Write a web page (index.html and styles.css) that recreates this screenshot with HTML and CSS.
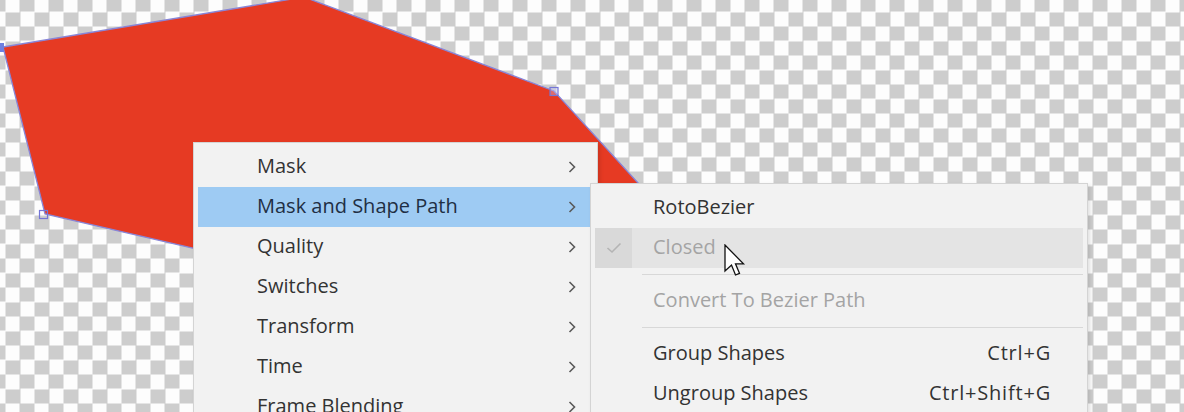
FILE: index.html
```html
<!DOCTYPE html>
<html>
<head>
<meta charset="utf-8">
<link rel="stylesheet" href="styles.css">
</head>
<body>
<div class="stage">
  <svg class="shape" width="1184" height="412" viewBox="0 0 1184 412">
    <polygon points="3,47 304,-3 554,91 660,207 400,296 45,214" fill="#e63a23" stroke="#8886d8" stroke-width="1.3"/>
    <rect x="-4" y="43" width="8" height="9" fill="#6d7fe0"/>
    <rect x="550" y="87.5" width="8" height="8" fill="rgba(200,200,255,0.35)" stroke="#7476d6" stroke-width="1.2"/>
    <rect x="39.5" y="210.5" width="8" height="8" fill="none" stroke="#7476d6" stroke-width="1.2"/>
  </svg>

  <div class="menu main-menu">
    <div class="item"><span class="label">Mask</span><svg class="chev" width="8" height="12" viewBox="0 0 8 12"><polyline points="1.5,1 6.5,6 1.5,11"/></svg></div>
    <div class="item active"><span class="label">Mask and Shape Path</span><svg class="chev" width="8" height="12" viewBox="0 0 8 12"><polyline points="1.5,1 6.5,6 1.5,11"/></svg></div>
    <div class="item"><span class="label">Quality</span><svg class="chev" width="8" height="12" viewBox="0 0 8 12"><polyline points="1.5,1 6.5,6 1.5,11"/></svg></div>
    <div class="item"><span class="label">Switches</span><svg class="chev" width="8" height="12" viewBox="0 0 8 12"><polyline points="1.5,1 6.5,6 1.5,11"/></svg></div>
    <div class="item"><span class="label">Transform</span><svg class="chev" width="8" height="12" viewBox="0 0 8 12"><polyline points="1.5,1 6.5,6 1.5,11"/></svg></div>
    <div class="item"><span class="label">Time</span><svg class="chev" width="8" height="12" viewBox="0 0 8 12"><polyline points="1.5,1 6.5,6 1.5,11"/></svg></div>
    <div class="item"><span class="label">Frame Blending</span><svg class="chev" width="8" height="12" viewBox="0 0 8 12"><polyline points="1.5,1 6.5,6 1.5,11"/></svg></div>
  </div>

  <div class="menu sub-menu">
    <div class="sub-item"><span class="check"></span><span class="label">RotoBezier</span></div>
    <div class="sub-item hover disabled"><span class="check"><svg width="16" height="12" viewBox="0 0 16 12"><polyline points="1.5,6 6,10 14.5,1.5"/></svg></span><span class="label">Closed</span></div>
    <div class="sep"></div>
    <div class="sub-item disabled"><span class="check"></span><span class="label">Convert To Bezier Path</span></div>
    <div class="sep"></div>
    <div class="sub-item"><span class="check"></span><span class="label">Group Shapes</span><span class="shortcut">Ctrl+G</span></div>
    <div class="sub-item"><span class="check"></span><span class="label">Ungroup Shapes</span><span class="shortcut">Ctrl+Shift+G</span></div>
  </div>

  <svg class="cursor" width="22" height="34" viewBox="0 0 22 34">
    <path d="M1,1 L1,27 L7.5,21 L11.5,31 L15.5,29.3 L11.5,19.8 L19.5,19.8 Z" fill="#ffffff" stroke="#111111" stroke-width="1.3" stroke-linejoin="miter"/>
  </svg>
</div>
</body>
</html>
```

FILE: styles.css
```css
html, body {
  margin: 0;
  padding: 0;
  width: 1184px;
  height: 412px;
  overflow: hidden;
}

body {
  font-family: "Open Sans", "Noto Sans", sans-serif;
  font-size: 20px;
  color: #333333;
}

.stage {
  position: relative;
  width: 1184px;
  height: 412px;
  overflow: hidden;
  background-color: #fdfdfd;
  background-image: conic-gradient(#cdcdcd 25%, #fdfdfd 0 50%, #cdcdcd 0 75%, #fdfdfd 0);
  background-size: 29px 29px;
  background-position: 5.5px 26.5px;
}

.shape {
  position: absolute;
  left: 0;
  top: 0;
  overflow: visible;
}

.menu {
  position: absolute;
  box-sizing: border-box;
  background: #f2f2f2;
  border: 1px solid #d4d4d4;
  padding: 4px;
  display: flex;
  flex-direction: column;
  box-shadow: 2px 2px 4px rgba(0, 0, 0, 0.12);
}

.main-menu {
  left: 193px;
  top: 142px;
  width: 405px;
  height: 320px;
}

.sub-menu {
  left: 590px;
  top: 183px;
  width: 498px;
  height: 280px;
}

.item {
  flex: none;
  box-sizing: border-box;
  height: 40px;
  display: flex;
  align-items: center;
  justify-content: space-between;
  padding: 0 17px 4px 59px;
}

.item .chev {
  margin-top: 4px;
}

.item.active {
  background: #9ecbf3;
  color: #1f2f44;
}

.chev {
  flex: none;
}

.chev polyline {
  fill: none;
  stroke: #5a5a5a;
  stroke-width: 1.6;
}

.sub-item {
  flex: none;
  box-sizing: border-box;
  height: 40px;
  display: flex;
  align-items: center;
  padding-right: 32px;
}

.sub-item .label {
  flex: 1;
  margin-left: 21px;
  padding-bottom: 4px;
}

.sub-item .check {
  flex: none;
  width: 37px;
  align-self: stretch;
  display: flex;
  align-items: center;
  justify-content: center;
}

.sub-item .check polyline {
  fill: none;
  stroke: #b4b4b4;
  stroke-width: 1.6;
}

.sub-item.hover {
  background: #e4e4e4;
}

.sub-item.hover .check {
  background: #d9d9d9;
}

.sub-item.disabled {
  color: #a4a4a4;
}

.shortcut {
  flex: none;
  padding-bottom: 4px;
  letter-spacing: 0.8px;
}

.sep {
  flex: none;
  height: 1px;
  background: #d8d8d8;
  margin: 6px 0 6px 47px;
}

.cursor {
  position: absolute;
  left: 724px;
  top: 244px;
}
```
